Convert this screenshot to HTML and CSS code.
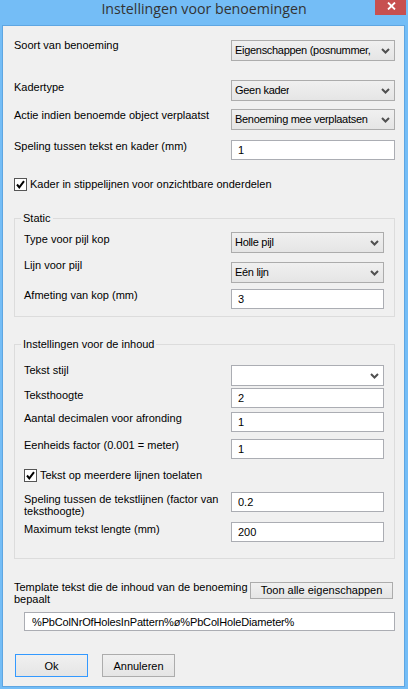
FILE: index.html
```html
<!DOCTYPE html>
<html lang="nl">
<head>
<meta charset="utf-8">
<title>Instellingen voor benoemingen</title>
<link rel="stylesheet" href="styles.css">
</head>
<body>
<div class="window">
  <div class="titlebar">
    <div class="tb-side"></div>
    <div class="title">Instellingen voor benoemingen</div>
    <div class="tb-side tb-right">
      <div class="close" aria-label="Sluiten">
        <svg width="9" height="8" viewBox="0 0 9 8"><path d="M1 0.5 L8 7.5 M8 0.5 L1 7.5" stroke="#fff" stroke-width="1.8" fill="none"/></svg>
      </div>
    </div>
  </div>
  <div class="client">
    <div class="row r1">
      <span class="lbl up1">Soort van benoeming</span>
      <div class="combo wide"><span class="ctext">Eigenschappen (posnummer,</span><svg class="chev" width="9" height="6" viewBox="0 0 9 6"><path d="M1 1 L4.5 4.5 L8 1" stroke="#505050" stroke-width="2" fill="none"/></svg></div>
    </div>
    <div class="row r2">
      <span class="lbl dn1">Kadertype</span>
      <div class="combo wide"><span class="ctext">Geen kader</span><svg class="chev" width="9" height="6" viewBox="0 0 9 6"><path d="M1 1 L4.5 4.5 L8 1" stroke="#505050" stroke-width="2" fill="none"/></svg></div>
    </div>
    <div class="row r3">
      <span class="lbl">Actie indien benoemde object verplaatst</span>
      <div class="combo wide"><span class="ctext">Benoeming mee verplaatsen</span><svg class="chev" width="9" height="6" viewBox="0 0 9 6"><path d="M1 1 L4.5 4.5 L8 1" stroke="#505050" stroke-width="2" fill="none"/></svg></div>
    </div>
    <div class="row r4">
      <span class="lbl">Speling tussen tekst en kader (mm)</span>
      <input class="field wide" type="text" value="1">
    </div>
    <div class="check c1">
      <span class="box"><svg width="13" height="13" viewBox="0 0 13 13"><path d="M3 6.5 L5.3 9.3 L10 3.2" stroke="#000" stroke-width="2" fill="none"/></svg></span>
      <span class="ctxt">Kader in stippelijnen voor onzichtbare onderdelen</span>
    </div>

    <fieldset class="group g1">
      <legend>Static</legend>
      <div class="row">
        <span class="lbl dn1">Type voor pijl kop</span>
        <div class="combo narrow"><span class="ctext">Holle pijl</span><svg class="chev" width="9" height="6" viewBox="0 0 9 6"><path d="M1 1 L4.5 4.5 L8 1" stroke="#505050" stroke-width="2" fill="none"/></svg></div>
      </div>
      <div class="row g1b">
        <span class="lbl up3">Lijn voor pijl</span>
        <div class="combo narrow"><span class="ctext">Eén lijn</span><svg class="chev" width="9" height="6" viewBox="0 0 9 6"><path d="M1 1 L4.5 4.5 L8 1" stroke="#505050" stroke-width="2" fill="none"/></svg></div>
      </div>
      <div class="row g1c">
        <span class="lbl">Afmeting van kop (mm)</span>
        <input class="field narrow" type="text" value="3">
      </div>
    </fieldset>

    <fieldset class="group g2">
      <legend>Instellingen voor de inhoud</legend>
      <div class="row">
        <span class="lbl up1">Tekst stijl</span>
        <div class="combo narrow edit"><span class="ctext"></span><svg class="chev" width="9" height="6" viewBox="0 0 9 6"><path d="M1 1 L4.5 4.5 L8 1" stroke="#505050" stroke-width="2" fill="none"/></svg></div>
      </div>
      <div class="row g2b">
        <span class="lbl dn1">Teksthoogte</span>
        <input class="field narrow" type="text" value="2">
      </div>
      <div class="row g2c">
        <span class="lbl">Aantal decimalen voor afronding</span>
        <input class="field narrow" type="text" value="1">
      </div>
      <div class="row g2d">
        <span class="lbl">Eenheids factor (0.001 = meter)</span>
        <input class="field narrow" type="text" value="1">
      </div>
      <div class="check c2">
        <span class="box"><svg width="13" height="13" viewBox="0 0 13 13"><path d="M3 6.5 L5.3 9.3 L10 3.2" stroke="#000" stroke-width="2" fill="none"/></svg></span>
        <span class="ctxt">Tekst op meerdere lijnen toelaten</span>
      </div>
      <div class="row g2e">
        <span class="lbl two dn2">Speling tussen de tekstlijnen (factor van<br>teksthoogte)</span>
        <input class="field narrow" type="text" value="0.2">
      </div>
      <div class="row g2f">
        <span class="lbl dn1">Maximum tekst lengte (mm)</span>
        <input class="field narrow" type="text" value="200">
      </div>
    </fieldset>

    <div class="row tplrow">
      <span class="lbl two">Template tekst die de inhoud van de benoeming<br>bepaalt</span>
      <button class="btn show" type="button">Toon alle eigenschappen</button>
    </div>
    <input class="field tpl" type="text" value="%PbColNrOfHolesInPattern%ø%PbColHoleDiameter%">

    <div class="actions">
      <button class="btn ok" type="button">Ok</button>
      <button class="btn" type="button">Annuleren</button>
    </div>
  </div>
</div>
</body>
</html>
```
FILE: styles.css
```css
html, body {
  margin: 0;
  padding: 0;
  background: #74bdf6;
}

.window {
  width: 408px;
  height: 689px;
  box-sizing: border-box;
  background: #74bdf6;
  display: flex;
  flex-direction: column;
  font-family: "Liberation Sans", Arial, sans-serif;
  font-size: 11px;
  color: #000;
}

.titlebar {
  height: 25px;
  flex: none;
  display: grid;
  grid-template-columns: 1fr auto 1fr;
  align-items: start;
}

.title {
  font-family: "Open Sans", "Noto Sans", sans-serif;
  font-size: 14.2px;
  line-height: 18px;
  padding-top: 0;
  color: #333;
  white-space: nowrap;
}

.tb-right {
  display: flex;
  justify-content: flex-end;
  padding-right: 2px;
}

.close {
  width: 31px;
  height: 15px;
  background: #c75050;
  display: flex;
  align-items: flex-start;
  justify-content: center;
  padding-top: 2px;
  box-sizing: border-box;
}
.close svg { margin-left: 1px; }

.client {
  flex: 1;
  margin: 0 3px 2px 2px;
  border: 1px solid #5ea6e2;
  background: #f0f0f0;
  padding: 14px 9px 0 11px;
  display: flex;
  flex-direction: column;
}

.row {
  display: flex;
  justify-content: space-between;
  align-items: flex-start;
}

.lbl {
  line-height: 13px;
  white-space: nowrap;
}
.lbl.two { line-height: 11.5px; }
.up1 { margin-top: -1px; }
.up3 { margin-top: -3px; }
.dn1 { margin-top: 1px; }
.dn2 { margin-top: 2px; }

.r2 { margin-top: 19px; }
.r3 { margin-top: 8px; }
.r4 { margin-top: 10px; }

.combo {
  height: 21px;
  box-sizing: border-box;
  border: 1px solid #acacac;
  background: linear-gradient(#f0f0f0, #e5e5e5);
  display: flex;
  align-items: center;
  justify-content: space-between;
  padding: 0 4px 0 3px;
}
.combo.edit {
  background: #fff;
  border-color: #abadb3;
}
.ctext {
  line-height: 13px;
  white-space: nowrap;
  overflow: hidden;
  letter-spacing: -0.3px;
}
.chev { flex: none; margin-top: 1px; }

.wide { width: 164px; }
.narrow { width: 153px; }

.field {
  height: 20px;
  box-sizing: border-box;
  border: 1px solid #abadb3;
  background: #fff;
  font-family: "Liberation Sans", Arial, sans-serif;
  font-size: 11px;
  color: #000;
  padding: 0 6px;
  margin: 0;
  outline: none;
}

.check {
  display: flex;
  align-items: flex-start;
  gap: 3px;
}
.c1 { margin-top: 18px; }
.box {
  width: 13px;
  height: 13px;
  box-sizing: border-box;
  border: 1px solid #555;
  background: #fff;
  display: flex;
  align-items: center;
  justify-content: center;
  flex: none;
}
.box svg { flex: none; }
.ctxt { line-height: 13px; white-space: nowrap; }

.group {
  margin: 21px 0 0 0;
  min-width: 0;
  border: 1px solid #dcdcdc;
  display: flex;
  flex-direction: column;
}
.group legend {
  padding: 0 2px;
  margin-left: -3px;
  line-height: 13px;
  height: 13px;
}
.g1 { padding: 7px 10px 7px 9px; }
.g1b { margin-top: 9px; }
.g1c { margin-top: 6px; }

.g2 { padding: 14px 10px 16px 9px; }
.g2b { margin-top: 2px; }
.g2c { margin-top: 4px; }
.g2d { margin-top: 7px; }
.c2 { margin-top: 10px; }
.g2e { margin-top: 10px; height: 20px; }
.g2f { margin-top: 10px; }

.tplrow { margin-top: 23px; padding-right: 2px; }

.btn {
  font-family: "Liberation Sans", Arial, sans-serif;
  font-size: 11px;
  color: #000;
  border: 1px solid #acacac;
  background: linear-gradient(#f0f0f0, #e5e5e5);
  margin: 0;
  padding: 0;
  box-sizing: border-box;
}
.show {
  width: 143px;
  height: 17px;
  line-height: 13px;
}

.tpl {
  margin-top: 7px;
  margin-left: 10px;
  height: 19px;
  width: 371px;
  padding-left: 7px;
  letter-spacing: -0.15px;
}

.actions {
  margin-top: 23px;
  display: flex;
  gap: 14px;
  padding-left: 1px;
}
.actions .btn {
  width: 73px;
  height: 23px;
}
.actions .ok {
  border-color: #3399ff;
}
```
